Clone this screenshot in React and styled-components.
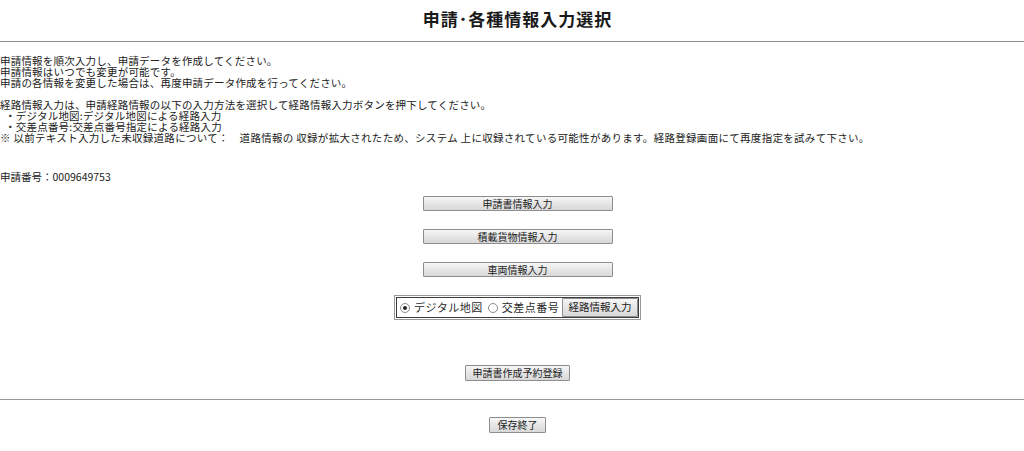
import React from 'react';
import styled, { createGlobalStyle } from 'styled-components';

const GlobalStyle = createGlobalStyle`
  html, body {
    margin: 0;
    padding: 0;
    background: #fff;
  }
  body {
    font-family: "Noto Sans CJK JP", "DejaVu Sans", sans-serif;
    color: #222;
  }
`;

const Page = styled.div`
  width: 1024px;
  height: 451px;
  overflow: hidden;
`;

const Header = styled.header`
  height: 42px;
  box-sizing: border-box;
  display: flex;
  align-items: center;
  justify-content: center;
  padding: 0 0 4px 11px;
  border-bottom: 1px solid #8c8c8c;
`;

const Title = styled.h1`
  margin: 0;
  font-size: 17px;
  font-weight: 700;
  letter-spacing: 1px;
  color: #1a1a1a;
`;

const Intro = styled.div`
  margin-top: 13px;
  font-size: 10.5px;
  letter-spacing: 0.2px;
  white-space: pre;
`;

const Line = styled.div`
  height: 11px;
  line-height: 11px;
  letter-spacing: ${p => p.$ls || 0.2}px;
`;

const AppNumber = styled.div`
  margin-top: 28px;
  font-size: 10.5px;
  line-height: 11px;
`;

const Center = styled.div`
  display: flex;
  flex-direction: column;
  align-items: center;
  padding-left: 11px;
  gap: ${p => p.$gap || 0}px;
  margin-top: ${p => p.$top || 0}px;
`;

const Button = styled.button`
  box-sizing: border-box;
  flex-shrink: 0;
  width: ${p => p.$w}px;
  height: ${p => p.$h || 15}px;
  padding: 0;
  font-family: "Noto Sans CJK JP", "DejaVu Sans", sans-serif;
  font-size: ${p => p.$fs || 10}px;
  line-height: 1;
  white-space: nowrap;
  color: #222;
  background: linear-gradient(#f6f6f6, #e6e6e6 50%, #d8d8d8);
  border: 1px solid #8e8e8e;
  border-radius: 1px;
  cursor: pointer;
`;

const RouteButton = styled(Button)`
  margin-left: auto;
`;

const RadioBox = styled.div`
  box-sizing: border-box;
  width: 247px;
  height: 25px;
  border: 1px solid #9a9a9a;
  padding: 1px;
`;

const RadioInner = styled.div`
  box-sizing: border-box;
  height: 100%;
  border: 1px solid #3c3c3c;
  display: flex;
  align-items: center;
  padding: 0 0 0 3px;
`;

const RadioLabel = styled.label`
  display: flex;
  align-items: center;
  flex-shrink: 0;
  white-space: nowrap;
  gap: 4px;
  font-size: 11px;
  letter-spacing: 0.5px;
  line-height: 1;
  color: #2a2a2a;
  margin-right: ${p => p.$mr || 0}px;
`;

const Radio = styled.input.attrs({ type: 'radio' })`
  appearance: none;
  flex-shrink: 0;
  margin: 0;
  width: 10px;
  height: 10px;
  border: 1px solid #8a8a8a;
  border-radius: 50%;
  background: #fff;
  display: grid;
  place-items: center;
  &:checked::after {
    content: '';
    width: 4px;
    height: 4px;
    border-radius: 50%;
    background: #222;
  }
`;

const Divider = styled.hr`
  margin: 18px 0 0;
  border: 0;
  border-top: 1px solid #9a9a9a;
  height: 0;
`;

const introLines = [
  '申請情報を順次入力し、申請データを作成してください。',
  '申請情報はいつでも変更が可能です。',
  '申請の各情報を変更した場合は、再度申請データ作成を行ってください。',
  '',
  '経路情報入力は、申請経路情報の以下の入力方法を選択して経路情報入力ボタンを押下してください。',
  '  ・デジタル地図:デジタル地図による経路入力',
  '  ・交差点番号:交差点番号指定による経路入力',
];

const noteLine = '※ 以前テキスト入力した未収録道路について：　道路情報の 収録が拡大されたため、システム 上に収録されている可能性があります。経路登録画面にて再度指定を試みて下さい。';

export default function App() {
  return (
    <Page>
      <GlobalStyle />
      <Header>
        <Title>申請･各種情報入力選択</Title>
      </Header>

      <Intro>
        {introLines.map((t, i) => (
          <Line key={i}>{t}</Line>
        ))}
        <Line $ls={0.3}>{noteLine}</Line>
      </Intro>

      <AppNumber>申請番号：0009649753</AppNumber>

      <Center $top={14} $gap={18}>
        <Button $w={190}>申請書情報入力</Button>
        <Button $w={190}>積載貨物情報入力</Button>
        <Button $w={190}>車両情報入力</Button>
        <RadioBox>
          <RadioInner>
            <RadioLabel $mr={5}>
              <Radio name="route" defaultChecked />
              デジタル地図
            </RadioLabel>
            <RadioLabel>
              <Radio name="route" />
              交差点番号
            </RadioLabel>
            <RouteButton $w={76} $h={19} $fs={10.5}>経路情報入力</RouteButton>
          </RadioInner>
        </RadioBox>
      </Center>

      <Center $top={45}>
        <Button $w={105} $h={16}>申請書作成予約登録</Button>
      </Center>

      <Divider />

      <Center $top={17}>
        <Button $w={57} $h={16}>保存終了</Button>
      </Center>
    </Page>
  );
}
